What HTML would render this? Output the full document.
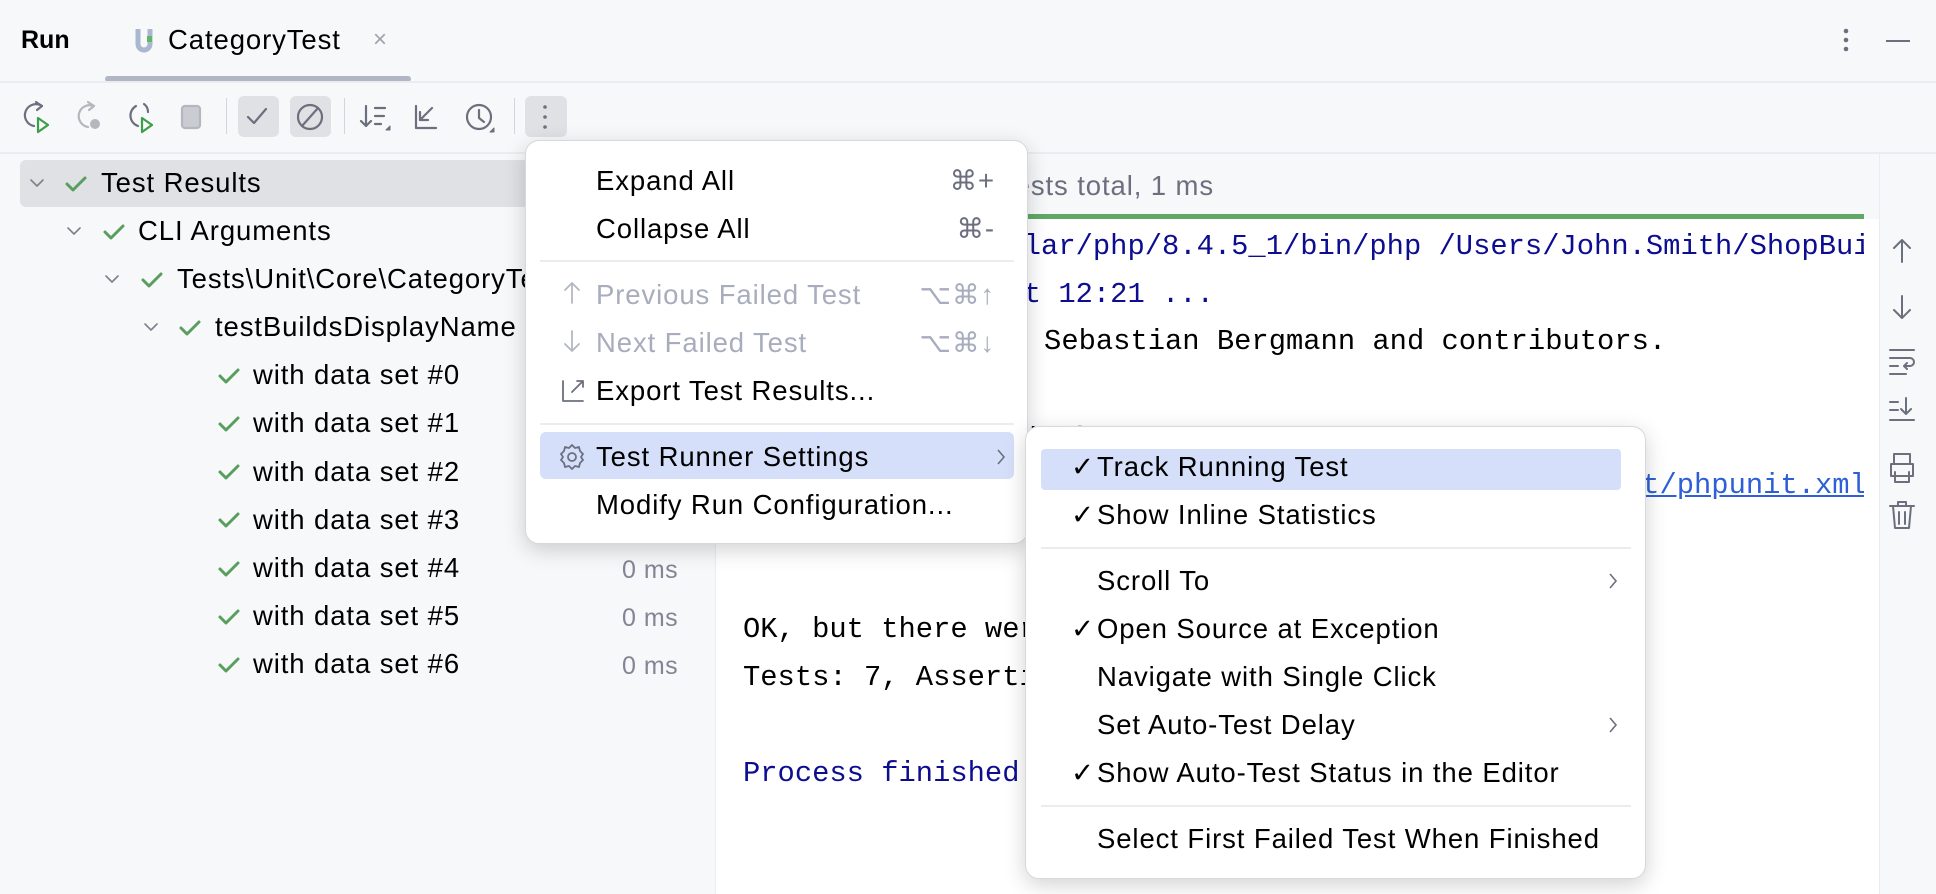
<!DOCTYPE html>
<html><head><meta charset="utf-8"><style>
*{margin:0;padding:0;box-sizing:border-box}
body{width:1936px;height:894px;overflow:hidden;background:#f7f8fa;font-family:"Liberation Sans",sans-serif;color:#000;position:relative}
.a{position:absolute;white-space:nowrap}
.ui{font-size:27.5px;line-height:30px;letter-spacing:0.9px}
.mono{font-family:"Liberation Mono",monospace;font-size:28.8px;line-height:30px;position:absolute;left:743px;white-space:pre}
.pop{position:absolute;background:#fff;border:1px solid #d6d8dd;border-radius:14px;box-shadow:0 6px 22px rgba(0,0,0,.18)}
.sep{position:absolute;height:2px;background:#ebecf0}
.ic{position:absolute}
</style></head><body>
<!-- header -->
<div class="a ui" style="left:21px;top:25px;font-weight:bold;font-size:25px;letter-spacing:0">Run</div>
<svg class="ic" style="left:135px;top:27px" width="18" height="28"><path d="M3 2v15a6 6 0 0 0 12 0V2" fill="none" stroke="#a9b7d0" stroke-width="5"/><rect x="12" y="9" width="5" height="6" fill="#5fb865"/></svg>
<div class="a ui" style="left:168px;top:25px;color:#000">CategoryTest</div>
<div class="a" style="left:373px;top:26px;font-size:24px;color:#a0a3aa">×</div>
<div class="a" style="left:105px;top:76px;width:306px;height:6px;border-radius:3px;background:#b1b6c4"></div>
<div class="a" style="left:0;top:81px;width:1936px;height:2px;background:#ebecf0"></div>
<svg class="ic" style="left:1838px;top:27px" width="16" height="28"><circle cx="8" cy="4" r="2.3" fill="#6c707e"/><circle cx="8" cy="13" r="2.3" fill="#6c707e"/><circle cx="8" cy="22" r="2.3" fill="#6c707e"/></svg>
<div class="a" style="left:1886px;top:40px;width:24px;height:2px;background:#6c707e"></div>
<!-- toolbar -->
<div class="a" style="left:238px;top:96px;width:41px;height:41px;border-radius:6px;background:#dfe1e5"></div>
<div class="a" style="left:290px;top:96px;width:41px;height:41px;border-radius:6px;background:#dfe1e5"></div>
<div class="a" style="left:525px;top:96px;width:42px;height:41px;border-radius:6px;background:#dfe1e5"></div>
<div class="a" style="left:226px;top:98px;width:1px;height:36px;background:#d3d5db"></div>
<div class="a" style="left:344px;top:98px;width:1px;height:36px;background:#d3d5db"></div>
<div class="a" style="left:514px;top:98px;width:1px;height:36px;background:#d3d5db"></div>
<svg class="ic" style="left:22px;top:100px" width="560" height="36" fill="none" stroke-width="2.2" stroke-linecap="round" stroke-linejoin="round">
<path d="M20 6a11 11 0 1 0-8 20" stroke="#6c707e"/><path d="M14 2l6 4-5 4" stroke="#6c707e"/><path d="M16 18v14l10-7z" stroke="#3d9e4a"/>
<g transform="translate(52 0)"><path d="M20 6a11 11 0 1 0-6 21" stroke="#b4b7be"/><path d="M14 2l6 4-5 4" stroke="#b4b7be"/><circle cx="21" cy="24" r="5" fill="#b4b7be" stroke="none"/></g>
<g transform="translate(104 0)"><path d="M10 6a11 11 0 0 0 2 20" stroke="#6c707e"/><path d="M18 4a10 10 0 0 1 4 8" stroke="#6c707e"/><path d="M16 18v14l10-7z" stroke="#3d9e4a"/></g>
<rect x="160" y="6" width="18" height="22" rx="3" fill="#c9ccd3" stroke="#b4b7be"/>
<path d="M226 17l6 6 12-14" stroke="#6c707e"/>
<circle cx="288" cy="17" r="12" stroke="#6c707e"/><path d="M280 26l16-18" stroke="#6c707e"/>
<path d="M344 6v20m-5-5l5 5 5-5M353 8h10M353 16h9M353 24h6" stroke="#6c707e"/><path d="M364 30l4-4v4z" fill="#6c707e" stroke="#6c707e" stroke-width="1"/>
<path d="M394 6v22h20M410 8l-12 12m0-8v8h8" stroke="#6c707e"/>
<circle cx="457" cy="17" r="12" stroke="#6c707e"/><path d="M457 10v8l5 4" stroke="#6c707e"/><path d="M468 32l4-4v4z" fill="#6c707e" stroke="#6c707e" stroke-width="1"/>
<circle cx="523" cy="7" r="1.8" fill="#6c707e" stroke="none"/><circle cx="523" cy="17" r="1.8" fill="#6c707e" stroke="none"/><circle cx="523" cy="27" r="1.8" fill="#6c707e" stroke="none"/>
</svg>
<div class="a" style="left:0;top:152px;width:1936px;height:2px;background:#ebecf0"></div>
<!-- tree -->
<div class="a" style="left:20px;top:160px;width:560px;height:47px;border-radius:6px;background:#dfe1e5"></div>
<div class="a" style="left:715px;top:154px;width:1px;height:740px;background:#ebecf0"></div>
<svg class="ic" style="left:0;top:160px" width="715" height="540" fill="none" stroke-linecap="round" stroke-linejoin="round">
<g stroke="#7d818c" stroke-width="1.6"><path d="M31 20l6 6 6-6"/><path d="M68 68l6 6 6-6"/><path d="M106 116l6 6 6-6"/><path d="M145 164l6 6 6-6"/></g>
<g stroke="#5a9e5e" stroke-width="3"><path d="M67 24l6 6 12-12"/><path d="M105 72l6 6 12-12"/><path d="M143 120l6 6 12-12"/><path d="M181 168l6 6 12-12"/>
<path d="M220 216l6 6 12-12"/><path d="M220 264l6 6 12-12"/><path d="M220 312l6 6 12-12"/><path d="M220 360l6 6 12-12"/><path d="M220 409l6 6 12-12"/><path d="M220 457l6 6 12-12"/><path d="M220 505l6 6 12-12"/></g>
</svg>
<div class="a ui" style="left:101px;top:168px">Test Results</div>
<div class="a ui" style="left:138px;top:216px">CLI Arguments</div>
<div class="a ui" style="left:177px;top:264px">Tests\Unit\Core\CategoryTest</div>
<div class="a ui" style="left:215px;top:312px">testBuildsDisplayName</div>
<div class="a ui" style="left:253px;top:360px">with data set #0</div>
<div class="a ui" style="left:253px;top:408px">with data set #1</div>
<div class="a ui" style="left:253px;top:457px">with data set #2</div>
<div class="a ui" style="left:253px;top:505px">with data set #3</div>
<div class="a ui" style="left:253px;top:553px">with data set #4</div>
<div class="a ui" style="left:253px;top:601px">with data set #5</div>
<div class="a ui" style="left:253px;top:649px">with data set #6</div>
<div class="a ui" style="left:622px;top:555px;color:#818594;font-size:25px;letter-spacing:0.5px">0 ms</div>
<div class="a ui" style="left:622px;top:603px;color:#818594;font-size:25px;letter-spacing:0.5px">0 ms</div>
<div class="a ui" style="left:622px;top:651px;color:#818594;font-size:25px;letter-spacing:0.5px">0 ms</div>
<!-- console -->
<div class="a" style="left:716px;top:154px;width:1163px;height:60px;background:#f7f8fa"></div>
<div class="a ui" style="left:735px;top:171px;color:#6c707e">Tests passed: 7 of 7 tests total, 1 ms</div>
<div class="a" style="left:716px;top:214px;width:1148px;height:5px;background:#5fa865"></div>
<div class="a" style="left:716px;top:219px;width:1163px;height:675px;background:#fff"></div>
<div class="a" style="left:1879px;top:154px;width:57px;height:740px;background:#f7f8fa;border-left:1px solid #ebecf0"></div>
<div style="position:absolute;left:0;top:0;width:1864px;height:894px;overflow:hidden">
<div class="mono" style="top:232px;left:730px;color:#0c0e8f">/opt/homebrew/Cellar/php/8.4.5_1/bin/php /Users/John.Smith/ShopBuilder/vendor/bin/phpunit</div>
<div class="mono" style="top:280px;left:730px;color:#0c0e8f">Testing started at 12:21 ...</div>
<div class="mono" style="top:327px;left:733px">PHPUnit 12.0.7 by Sebastian Bergmann and contributors.</div>
<div class="mono" style="top:423px">Runtime:       PHP 8.4.5</div>
<div class="mono" style="top:471px;left:709px">Configuration: <span style="color:#2f5fd6;text-decoration:underline">/Users/John.Smith/ShopBuilder/tests/unit/phpunit.xml</span></div>
<div class="mono" style="top:519px">..............</div>
<div class="mono" style="top:615px">OK, but there were issues!</div>
<div class="mono" style="top:663px">Tests: 7, Assertions: 7, PHPUnit Deprecations: 1.</div>
<div class="mono" style="top:759px;color:#0c0e8f">Process finished with exit code 0</div>
</div>
<svg class="ic" style="left:1886px;top:236px" width="32" height="300" fill="none" stroke="#6c707e" stroke-width="2" stroke-linecap="round" stroke-linejoin="round">
<path d="M16 4v22M8 12l8-8 8 8"/><path d="M16 60v22M8 74l8 8 8-8"/>
<path d="M4 114h24M4 122h20a4 4 0 0 1 0 8h-6m3-3l-3 3 3 3M4 130h8M4 138h16"/>
<path d="M4 166h8M4 174h8M4 184h24M20 162v16m-5-5l5 5 5-5"/>
<path d="M8 228v-10h16v10M5 228h22v12H5zM9 236v10h14v-10"/>
<path d="M4 270h24M12 270v-4h8v4M7 270l2 22h14l2-22M13 276v12M19 276v12"/>
</svg>
<!-- popup 1 -->
<div class="pop" style="left:525px;top:140px;width:503px;height:404px">
<div class="a" style="left:14px;top:291px;width:474px;height:47px;border-radius:6px;background:#d5dffa"></div>
<div class="sep" style="left:14px;top:119px;width:474px"></div>
<div class="sep" style="left:14px;top:282px;width:474px"></div>
<div class="a ui" style="left:70px;top:25px">Expand All</div><div class="a ui" style="right:32px;top:25px;color:#6c707e">⌘+</div>
<div class="a ui" style="left:70px;top:73px">Collapse All</div><div class="a ui" style="right:32px;top:73px;color:#6c707e">⌘-</div>
<div class="a ui" style="left:70px;top:139px;color:#a8adbd">Previous Failed Test</div><div class="a ui" style="right:32px;top:139px;color:#a8adbd">⌥⌘↑</div>
<div class="a ui" style="left:70px;top:187px;color:#a8adbd">Next Failed Test</div><div class="a ui" style="right:32px;top:187px;color:#a8adbd">⌥⌘↓</div>
<div class="a ui" style="left:70px;top:235px">Export Test Results...</div>
<div class="a ui" style="left:70px;top:301px">Test Runner Settings</div>
<div class="a ui" style="left:70px;top:349px">Modify Run Configuration...</div>
<svg class="ic" style="left:34px;top:140px" width="30" height="270" fill="none" stroke-width="1.8" stroke-linecap="round" stroke-linejoin="round">
<path d="M12 2v20M5 9l7-7 7 7" stroke="#b4b7c2"/><path d="M12 50v20M5 63l7 7 7-7" stroke="#b4b7c2"/>
<path d="M3 100v20h20M12 111l11-11m-6 0h6v6" stroke="#6c707e"/>
<circle cx="12" cy="176" r="4" stroke="#6c707e"/><path d="M12 164l3 3 4-1 1 4 3 3-2 3 2 3-3 3-1 4-4-1-3 3-3-3-4 1-1-4-3-3 2-3-2-3 3-3 1-4 4 1z" stroke="#6c707e"/>
</svg>
<svg class="ic" style="left:468px;top:305px" width="14" height="22" fill="none" stroke="#6c707e" stroke-width="1.6"><path d="M4 4l6 7-6 7"/></svg>
</div>
<!-- popup 2 -->
<div class="pop" style="left:1025px;top:426px;width:621px;height:453px">
<div class="a" style="left:15px;top:22px;width:580px;height:41px;border-radius:4px;background:#d5dffa"></div>
<div class="sep" style="left:15px;top:120px;width:590px"></div>
<div class="sep" style="left:15px;top:378px;width:590px"></div>
<div class="a ui" style="left:45px;top:25px">✓</div><div class="a ui" style="left:71px;top:25px">Track Running Test</div>
<div class="a ui" style="left:45px;top:73px">✓</div><div class="a ui" style="left:71px;top:73px">Show Inline Statistics</div>
<div class="a ui" style="left:71px;top:139px">Scroll To</div>
<div class="a ui" style="left:45px;top:187px">✓</div><div class="a ui" style="left:71px;top:187px">Open Source at Exception</div>
<div class="a ui" style="left:71px;top:235px">Navigate with Single Click</div>
<div class="a ui" style="left:71px;top:283px">Set Auto-Test Delay</div>
<div class="a ui" style="left:45px;top:331px">✓</div><div class="a ui" style="left:71px;top:331px">Show Auto-Test Status in the Editor</div>
<div class="a ui" style="left:71px;top:397px">Select First Failed Test When Finished</div>
<svg class="ic" style="left:580px;top:143px" width="14" height="170" fill="none" stroke="#6c707e" stroke-width="1.6"><path d="M4 4l6 7-6 7"/><path d="M4 148l6 7-6 7"/></svg>
</div>
</body></html>
